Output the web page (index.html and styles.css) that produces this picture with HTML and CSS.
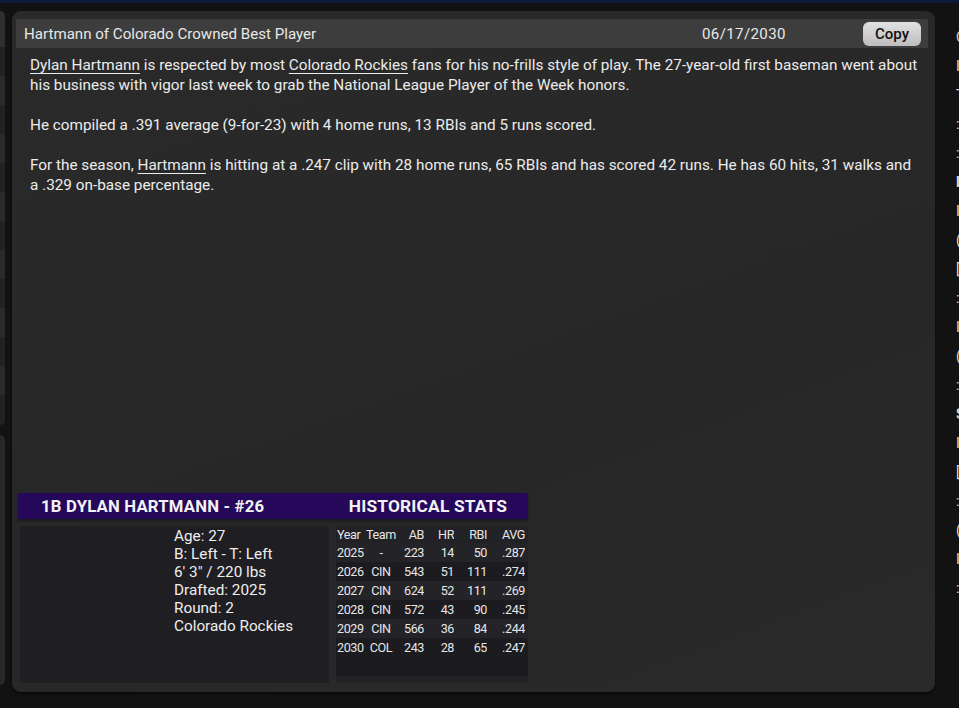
FILE: index.html
```html
<!DOCTYPE html>
<html>
<head>
<meta charset="utf-8">
<link rel="stylesheet" href="styles.css">
</head>
<body>
<div class="topstrip"></div>
<div class="layout">
  <aside class="leftside">
    <div class="lpanel">
      <div class="lrow lhead"></div>
      <div class="lrow a"></div>
      <div class="lrow b"></div>
      <div class="lrow a"></div>
      <div class="lrow b"></div>
      <div class="lrow a"></div>
      <div class="lrow b"></div>
      <div class="lrow a"></div>
      <div class="lrow b"></div>
      <div class="lrow a"></div>
      <div class="lrow b"></div>
      <div class="lrow a"></div>
      <div class="lrow b"></div>
      <div class="lrow a"></div>
    </div>
    <div class="lpanel2"></div>
  </aside>

  <main class="panel">
    <header class="headbar">
      <div class="headline">Hartmann of Colorado Crowned Best Player</div>
      <div class="date">06/17/2030</div>
      <button class="copy">Copy</button>
    </header>

    <article class="story">
      <p><span class="link">Dylan Hartmann</span> is respected by most <span class="link">Colorado Rockies</span> fans for his no-frills style of play. The 27-year-old first baseman went about his business with vigor last week to grab the National League Player of the Week honors.</p>
      <p>He compiled a .391 average (9-for-23) with 4 home runs, 13 RBIs and 5 runs scored.</p>
      <p>For the season, <span class="link">Hartmann</span> is hitting at a .247 clip with 28 home runs, 65 RBIs and has scored 42 runs. He has 60 hits, 31 walks and a .329 on-base percentage.</p>
    </article>

    <section class="card">
      <div class="cardbar">
        <div class="cb-name">1B DYLAN HARTMANN - #26</div>
        <div class="cb-hist">HISTORICAL STATS</div>
      </div>
      <div class="cardbody">
        <div class="bio">
          <div class="bio-lines">
            <div>Age: 27</div>
            <div>B: Left - T: Left</div>
            <div>6' 3" / 220 lbs</div>
            <div>Drafted: 2025</div>
            <div>Round: 2</div>
            <div>Colorado Rockies</div>
          </div>
        </div>
        <div class="stats">
          <div class="srow shead">
            <span class="c-year">Year</span><span class="c-team">Team</span><span class="c-ab">AB</span><span class="c-hr">HR</span><span class="c-rbi">RBI</span><span class="c-avg">AVG</span>
          </div>
          <div class="srow odd"><span class="c-year">2025</span><span class="c-team">-</span><span class="c-ab">223</span><span class="c-hr">14</span><span class="c-rbi">50</span><span class="c-avg">.287</span></div>
          <div class="srow even"><span class="c-year">2026</span><span class="c-team">CIN</span><span class="c-ab">543</span><span class="c-hr">51</span><span class="c-rbi">111</span><span class="c-avg">.274</span></div>
          <div class="srow odd"><span class="c-year">2027</span><span class="c-team">CIN</span><span class="c-ab">624</span><span class="c-hr">52</span><span class="c-rbi">111</span><span class="c-avg">.269</span></div>
          <div class="srow even"><span class="c-year">2028</span><span class="c-team">CIN</span><span class="c-ab">572</span><span class="c-hr">43</span><span class="c-rbi">90</span><span class="c-avg">.245</span></div>
          <div class="srow odd"><span class="c-year">2029</span><span class="c-team">CIN</span><span class="c-ab">566</span><span class="c-hr">36</span><span class="c-rbi">84</span><span class="c-avg">.244</span></div>
          <div class="srow even"><span class="c-year">2030</span><span class="c-team">COL</span><span class="c-ab">243</span><span class="c-hr">28</span><span class="c-rbi">65</span><span class="c-avg">.247</span></div>
          <div class="srow blank"></div>
        </div>
      </div>
    </section>
  </main>

  <aside class="rightside">
    <div class="rline">C</div>
    <div class="rline">I</div>
    <div class="rline">T</div>
    <div class="rline">:</div>
    <div class="rline">:</div>
    <div class="rline bold">M</div>
    <div class="rline">I</div>
    <div class="rline">(</div>
    <div class="rline">[</div>
    <div class="rline">:</div>
    <div class="rline">I</div>
    <div class="rline">(</div>
    <div class="rline">:</div>
    <div class="rline bold">S</div>
    <div class="rline">I</div>
    <div class="rline">[</div>
    <div class="rline">:</div>
    <div class="rline">(</div>
    <div class="rline">I</div>
    <div class="rline">:</div>
  </aside>
</div>
</body>
</html>
```

FILE: styles.css
```css
* { box-sizing: border-box; }

html, body {
  margin: 0;
  padding: 0;
  width: 959px;
  height: 708px;
  overflow: hidden;
  background: #121212;
  font-family: Roboto, "Liberation Sans", sans-serif;
  color: #e9e9e9;
}

.topstrip {
  height: 3px;
  background: #0e1a3a;
}

.layout {
  display: flex;
  height: 705px;
  padding-top: 8px;
}

/* left sliver */
.leftside {
  width: 5px;
  flex: none;
  display: flex;
  flex-direction: column;
  gap: 10px;
  margin-right: 7px;
}
.lpanel {
  height: 414px;
  border-radius: 0 8px 8px 0;
  overflow: hidden;
  background: #262626;
  display: flex;
  flex-direction: column;
}
.lrow { height: 29px; flex: none; }
.lrow.lhead { height: 36px; background: #2f2f2f; }
.lrow.a { background: #222; }
.lrow.b { background: #2b2b2b; }
.lpanel2 {
  height: 250px;
  border-radius: 0 8px 8px 0;
  background: #282828;
}

/* main panel */
.panel {
  width: 923px;
  height: 681px;
  flex: none;
  background: linear-gradient(160deg, #2a2a2a 0%, #272727 60%, #2a2a2a 100%);
  border-radius: 9px;
  padding: 8px 7px 9px 4px;
  display: flex;
  flex-direction: column;
  box-shadow: 0 2px 3px rgba(0,0,0,0.5);
}

.headbar {
  height: 29px;
  flex: none;
  background: #3d3d3d;
  display: flex;
  align-items: center;
  padding: 0 7px 0 8px;
  font-size: 15.1px;
}
.headline {
  flex: 1;
  color: #e8e8e8;
}
.date {
  width: 86px;
  margin-right: 75px;
  color: #e8e8e8;
  font-size: 15.1px;
  letter-spacing: 0.35px;
}
.copy {
  width: 58px;
  height: 24px;
  border: none;
  border-radius: 6px;
  background: linear-gradient(#e2e2e2, #bdbdbd);
  color: #111;
  font-family: Roboto, "Liberation Sans", sans-serif;
  font-size: 15px;
  font-weight: 500;
  padding: 0;
}

.story {
  flex: 1;
  padding: 7px 10px 0 14px;
  font-size: 15.3px;
  line-height: 20px;
  color: #ececec;
}
.story p {
  margin: 0 0 20px 0;
}
.link {
  text-decoration: underline;
  text-underline-offset: 3px;
  text-decoration-thickness: 1px;
}

/* player card */
.card {
  width: 510px;
  margin-left: 2px;
  flex: none;
}
.cardbar {
  height: 26px;
  background: #26085a;
  display: flex;
  align-items: center;
  font-weight: 700;
  color: #f2f2f2;
  box-shadow: 0 2px 3px rgba(0,0,0,0.35);
  border-radius: 2px 2px 0 0;
}
.cb-name {
  width: 318px;
  padding-left: 23px;
  font-size: 16.7px;
  letter-spacing: 0.2px;
}
.cb-hist {
  width: 192px;
  text-align: center;
  padding-right: 8px;
  letter-spacing: 0.2px;
  font-size: 17.3px;
}
.cardbody {
  display: flex;
  gap: 7px;
  margin-top: 7px;
  height: 157px;
}
.bio {
  width: 309px;
  margin-left: 2px;
  background: #1f1e23;
  padding: 1px 0 0 154px;
}
.bio-lines {
  font-size: 15.3px;
  line-height: 18px;
  color: #eeeeee;
}
.stats {
  width: 192px;
  background: #222125;
  font-size: 12.6px;
  letter-spacing: -0.4px;
  color: #e6e6e6;
}
.srow {
  display: flex;
  height: 19px;
  align-items: center;
  padding-left: 1px;
}
.srow.shead { height: 17px; background: #222125; }
.srow.odd { background: #242328; }
.srow.even { background: #1c1b1f; }
.srow.blank { background: #1b1a1e; }
.srow span { display: block; white-space: nowrap; overflow: hidden; }
.c-year { width: 29px; }
.c-team { width: 30px; text-align: center; }
.c-ab { width: 28px; text-align: right; }
.c-hr { width: 30px; text-align: right; }
.c-rbi { width: 33px; text-align: right; }
.c-avg { width: 38px; text-align: right; }

/* right sliver */
.rightside {
  flex: 1;
  padding: 16px 0 0 21px;
  overflow: hidden;
  font-size: 14px;
  color: #dcdcdc;
}
.rline {
  height: 29px;
  line-height: 20px;
  white-space: nowrap;
}
.rline.bold { font-weight: 700; }
```
